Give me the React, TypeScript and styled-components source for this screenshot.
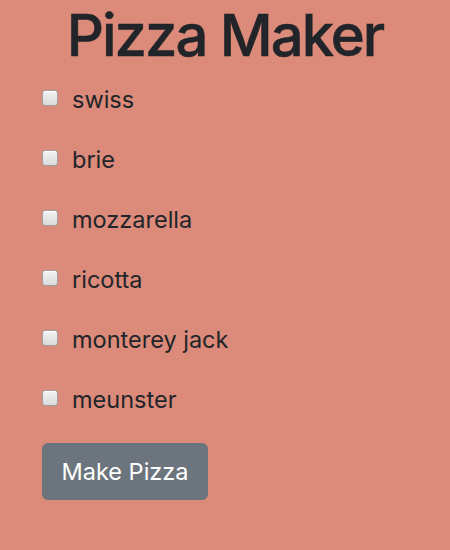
import React from "react";
import styled, { createGlobalStyle } from "styled-components";

const Global = createGlobalStyle`
  html, body { margin: 0; padding: 0; background: #dc8a7a; }
  body { font-family: Inter, "Open Sans", sans-serif; color: #212529; }
`;

const Page = styled.div`
  width: 450px;
  min-height: 550px;
  background: #dc8a7a;
  padding: 0 42px;
  box-sizing: border-box;
`;

const Title = styled.h1`
  margin: 0;
  font-size: 58px;
  font-weight: 500;
  line-height: 70px;
  text-align: center;
  color: #212529;
  letter-spacing: -2px;
  -webkit-text-stroke: 0.5px #212529;
`;

const List = styled.div`
  display: flex;
  flex-direction: column;
`;

const Row = styled.label`
  height: 60px;
  display: flex;
  align-items: center;
  gap: 14px;
  font-size: 23.5px;
  line-height: 28px;
  color: #212529;
`;

const Box = styled.input`
  appearance: none;
  margin: 0;
  width: 16px;
  height: 16px;
  box-sizing: border-box;
  border: 1px solid #9e9e9e;
  border-radius: 3px;
  background: linear-gradient(#f2f2f2, #dadada);
  box-shadow: inset 0 1px 0 #fff;
  position: relative;
  top: -2px;
`;

const Button = styled.button`
  margin-top: 13px;
  width: 166px;
  height: 57px;
  border: none;
  border-radius: 6px;
  background: #6c757d;
  color: #fff;
  font-family: Inter, sans-serif;
  font-size: 23.5px;
  font-weight: 400;
  cursor: pointer;
`;

const cheeses = ["swiss", "brie", "mozzarella", "ricotta", "monterey jack", "meunster"];

export default function App() {
  return (
    <Page>
      <Global />
      <Title>Pizza Maker</Title>
      <List>
        {cheeses.map((c) => (
          <Row key={c}>
            <Box type="checkbox" />
            <span>{c}</span>
          </Row>
        ))}
      </List>
      <Button>Make Pizza</Button>
    </Page>
  );
}
